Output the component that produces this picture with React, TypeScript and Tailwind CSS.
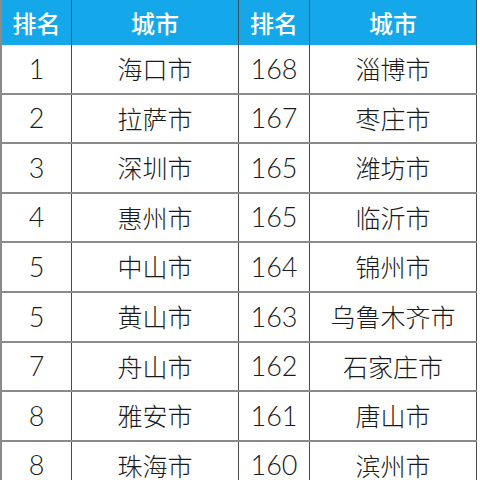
import React from "react";

const rows: [string, string, string, string][] = [
  ["1", "海口市", "168", "淄博市"],
  ["2", "拉萨市", "167", "枣庄市"],
  ["3", "深圳市", "165", "潍坊市"],
  ["4", "惠州市", "165", "临沂市"],
  ["5", "中山市", "164", "锦州市"],
  ["5", "黄山市", "163", "乌鲁木齐市"],
  ["7", "舟山市", "162", "石家庄市"],
  ["8", "雅安市", "161", "唐山市"],
  ["8", "珠海市", "160", "滨州市"],
];

const cjk = { fontFamily: '"Noto Sans CJK SC", "Noto Sans", sans-serif' };
const num = { fontFamily: 'Lato, "Noto Sans", "Noto Sans CJK SC", sans-serif' };

export default function App() {
  return (
    <div className="w-[480px] h-[480px] overflow-hidden bg-white">
      <div className="w-[477px] border-l-2 border-[#8a8a8a]">
        <div className="grid grid-cols-[70px_167px_71px_167px] h-[45px] bg-[#14a8ea] text-white text-[24px] font-medium" style={cjk}>
          <div className="flex items-center justify-center border-r border-[#4a4a4a]">排名</div>
          <div className="flex items-center justify-center border-r border-[#4a4a4a]">城市</div>
          <div className="flex items-center justify-center border-r border-[#4a4a4a]">排名</div>
          <div className="flex items-center justify-center border-r border-[#4a4a4a]">城市</div>
        </div>
        {rows.map((r, i) => (
          <div key={i} className="grid grid-cols-[70px_167px_71px_167px] h-[49.6px] border-b-2 border-[#8a8a8a] text-[#1a1a1a]">
            <div className="flex items-center justify-center border-r border-[#4a4a4a] text-[27px] font-light" style={num}>{r[0]}</div>
            <div className="flex items-center justify-center border-r border-[#4a4a4a] text-[25px] font-light" style={cjk}>{r[1]}</div>
            <div className="flex items-center justify-center border-r border-[#4a4a4a] text-[27px] font-light" style={num}>{r[2]}</div>
            <div className="flex items-center justify-center border-r border-[#4a4a4a] text-[25px] font-light" style={cjk}>{r[3]}</div>
          </div>
        ))}
      </div>
    </div>
  );
}
